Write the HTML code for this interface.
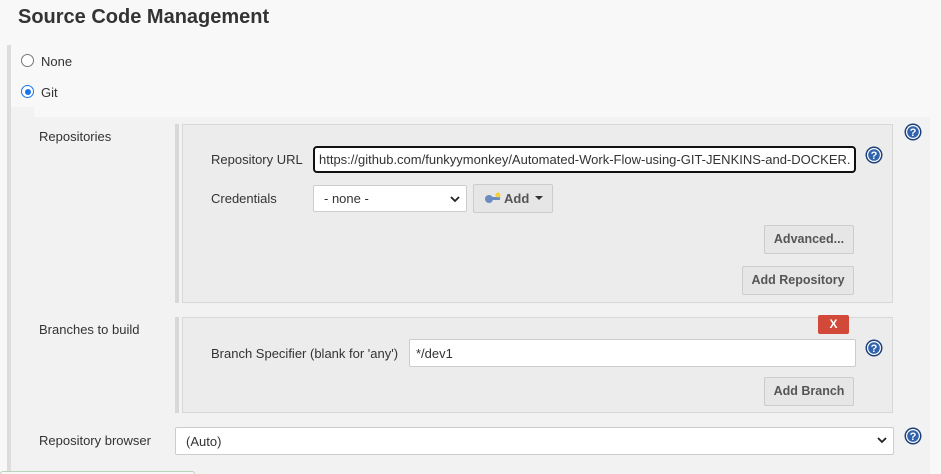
<!DOCTYPE html>
<html style="overflow:hidden;height:474px"><head><style>
*{box-sizing:border-box;margin:0;padding:0}
html,body{overflow:hidden}
body{width:941px;height:474px;background:#f8f8f8;font-family:"Liberation Sans",Arial,sans-serif;font-size:13px;color:#333;position:relative}
.a{position:absolute}
.lbl{position:absolute;font-size:13px;color:#333}
.btn{position:absolute;background:#e6e6e6;border:1px solid #ccc;border-radius:2px;font-weight:bold;font-size:12.5px;color:#555;text-align:center}
.inp{position:absolute;background:#fff;border:1px solid #ccc;border-radius:2px;font-size:13px;color:#333;padding-left:6px;white-space:nowrap;overflow:hidden}
.help{position:absolute;width:18px;height:18px}
</style></head><body>
<div class="a" style="left:18px;top:6px;font-size:20px;font-weight:bold;color:#333">Source Code Management</div>
<div class="a" style="left:7px;top:45px;width:4px;height:429px;background:#ddd"></div>
<div class="a" style="left:21px;top:54px;width:13px;height:13px;border:1px solid #777;border-radius:50%;background:#fff"></div>
<div class="lbl" style="left:41px;top:54px">None</div>
<div class="a" style="left:21px;top:85px;width:13px;height:13px;border:1.5px solid #1a73e8;border-radius:50%;background:#fff"></div>
<div class="a" style="left:24.5px;top:88.5px;width:6px;height:6px;border-radius:50%;background:#1a73e8"></div>
<div class="lbl" style="left:41px;top:85px">Git</div>
<div class="a" style="left:11px;top:107px;width:23px;height:10px;background:#f2f2f2"></div>
<div class="a" style="left:11px;top:117px;width:919px;height:357px;background:#f2f2f2"></div>
<div class="lbl" style="left:39px;top:129px">Repositories</div>
<div class="a" style="left:175px;top:124px;width:4px;height:179px;background:#d8d8d8"></div>
<div class="a" style="left:182px;top:124px;width:711px;height:179px;background:#ececec;border:1px solid #d8d8d8"></div>
<div class="lbl" style="left:211px;top:152px">Repository URL</div>
<div class="inp" style="left:313px;top:146px;width:543px;height:27px;border:2px solid #111;border-radius:4px;line-height:23px;padding-left:4px">https://github.com/funkyymonkey/Automated-Work-Flow-using-GIT-JENKINS-and-DOCKER.</div>
<div class="lbl" style="left:211px;top:191px">Credentials</div>
<div class="inp" style="left:313px;top:185px;width:154px;height:27px;line-height:26px;padding-left:10px">- none -</div>
<svg class="a" style="left:450px;top:195px" width="10" height="8"><path d="M1 2l4 4 4-4" stroke="#222" stroke-width="1.8" fill="none"/></svg>
<div class="btn" style="left:473px;top:184px;width:80px;height:29px;line-height:27px;text-align:left;padding-left:30px;font-size:13px">Add</div>
<svg class="a" style="left:484px;top:192px" width="18" height="12"><circle cx="5" cy="7" r="4" fill="#6a8cc0"/><rect x="7" y="5" width="9" height="3" fill="#6a8cc0"/><circle cx="14" cy="3" r="2.5" fill="#f2d040"/></svg>
<svg class="a" style="left:535px;top:196px" width="8" height="5"><path d="M0 0h8L4 4z" fill="#333"/></svg>
<div class="btn" style="left:764px;top:225px;width:90px;height:29px;line-height:27px">Advanced...</div>
<div class="btn" style="left:742px;top:266px;width:112px;height:29px;line-height:27px">Add Repository</div>
<div class="lbl" style="left:39px;top:322px">Branches to build</div>
<div class="a" style="left:175px;top:317px;width:4px;height:96px;background:#d8d8d8"></div>
<div class="a" style="left:182px;top:317px;width:711px;height:96px;background:#ececec;border:1px solid #d8d8d8"></div>
<div class="a" style="left:818px;top:315px;width:31px;height:19px;background:#d24939;border-radius:2px;color:#fff;font-weight:bold;font-size:12px;text-align:center;line-height:19px">X</div>
<div class="lbl" style="left:211px;top:346px">Branch Specifier (blank for 'any')</div>
<div class="inp" style="left:409px;top:339px;width:447px;height:28px;line-height:27px;padding-left:6px">*/dev1</div>
<div class="btn" style="left:764px;top:377px;width:90px;height:29px;line-height:27px">Add Branch</div>
<div class="lbl" style="left:39px;top:433px">Repository browser</div>
<div class="inp" style="left:175px;top:427px;width:719px;height:28px;line-height:27px;padding-left:10px">(Auto)</div>
<svg class="a" style="left:877px;top:436px" width="10" height="8"><path d="M1 2l4 4 4-4" stroke="#222" stroke-width="1.8" fill="none"/></svg>
<svg class="help" style="left:904px;top:123px" viewBox="0 0 18 18"><circle cx="9" cy="9" r="8.5" fill="#1d3f7a"/><circle cx="9" cy="9" r="7" fill="#fff"/><circle cx="9" cy="9" r="5.8" fill="#2f63ad"/><text x="9" y="13" font-size="11" font-weight="bold" fill="#fff" text-anchor="middle" font-family="Liberation Sans">?</text></svg>
<svg class="help" style="left:865px;top:146px" viewBox="0 0 18 18"><circle cx="9" cy="9" r="8.5" fill="#1d3f7a"/><circle cx="9" cy="9" r="7" fill="#fff"/><circle cx="9" cy="9" r="5.8" fill="#2f63ad"/><text x="9" y="13" font-size="11" font-weight="bold" fill="#fff" text-anchor="middle" font-family="Liberation Sans">?</text></svg>
<svg class="help" style="left:865px;top:339px" viewBox="0 0 18 18"><circle cx="9" cy="9" r="8.5" fill="#1d3f7a"/><circle cx="9" cy="9" r="7" fill="#fff"/><circle cx="9" cy="9" r="5.8" fill="#2f63ad"/><text x="9" y="13" font-size="11" font-weight="bold" fill="#fff" text-anchor="middle" font-family="Liberation Sans">?</text></svg>
<svg class="help" style="left:904px;top:427px" viewBox="0 0 18 18"><circle cx="9" cy="9" r="8.5" fill="#1d3f7a"/><circle cx="9" cy="9" r="7" fill="#fff"/><circle cx="9" cy="9" r="5.8" fill="#2f63ad"/><text x="9" y="13" font-size="11" font-weight="bold" fill="#fff" text-anchor="middle" font-family="Liberation Sans">?</text></svg>
<div class="a" style="left:0;top:471px;width:195px;height:3px;border:1px solid #b8d4b8;border-bottom:none;border-radius:4px 4px 0 0;background:#f8f8f8"></div>
</body></html>
